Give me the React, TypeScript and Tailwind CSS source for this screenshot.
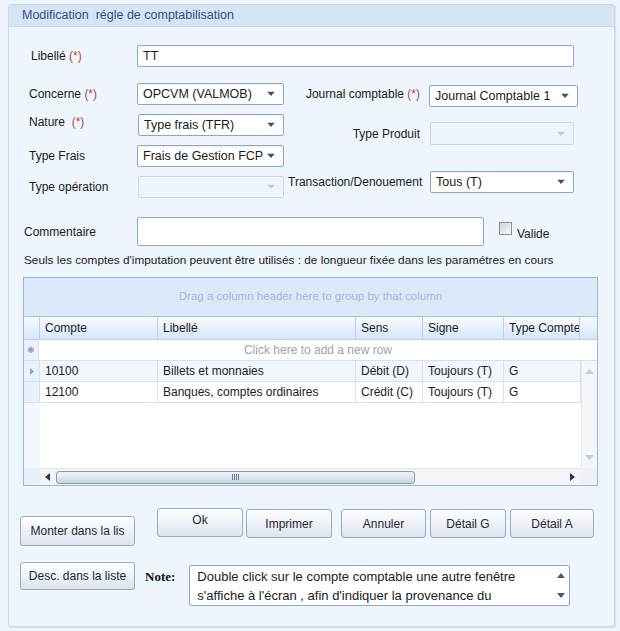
import React from "react";

const FONT = { fontFamily: '"Liberation Sans", Arial, sans-serif' };

function Arrow({ disabled }: { disabled?: boolean }) {
  return (
    <svg width="8" height="5" viewBox="0 0 8 5" className="absolute right-[8px] top-1/2 -translate-y-1/2">
      <polygon points="0,0 8,0 4,4.5" fill={disabled ? "#c3cdd9" : "#3e5170"} />
    </svg>
  );
}

function Select({ value, className, disabled }: { value?: string; className: string; disabled?: boolean }) {
  return (
    <div
      className={
        "relative rounded-[2px] border flex items-center pl-[5px] text-[12.5px] text-[#1b1b1b] whitespace-nowrap " +
        (disabled ? "border-[#c9d7e8] bg-[#eef4fb] " : "border-[#8aa8cf] bg-white shadow-[inset_0_1px_1px_rgba(0,0,0,0.05)] ") +
        className
      }
    >
      <span className="leading-none">{value}</span>
      <Arrow disabled={disabled} />
    </div>
  );
}

function Req() {
  return <span className="text-[#c2413f]">(*)</span>;
}

function Btn({ children, className }: { children: React.ReactNode; className: string }) {
  return (
    <div
      className={
        "flex items-center justify-center rounded-[3px] border border-[#98abc4] bg-linear-to-b from-[#fdfeff] via-[#eef2f7] to-[#dce4ee] text-[12px] text-[#1f2633] whitespace-nowrap shadow-[inset_0_1px_0_#ffffff] " +
        className
      }
    >
      {children}
    </div>
  );
}

function HeaderCell({ children, className }: { children?: React.ReactNode; className: string }) {
  return (
    <div className={"h-full flex items-center pl-[5px] border-l border-[#b9cfea] text-[12px] text-[#1b1b1b] whitespace-nowrap overflow-hidden " + className}>
      {children}
    </div>
  );
}

function Cell({ children, className }: { children?: React.ReactNode; className: string }) {
  return (
    <div className={"h-full flex items-center pl-[5px] border-r border-[#d3e1f1] text-[12px] text-[#1b1b1b] whitespace-nowrap overflow-hidden " + className}>
      {children}
    </div>
  );
}

export default function App() {
  return (
    <div className="w-[620px] h-[631px] bg-[#eef5fc] pt-[4px] pl-[8px]" style={FONT}>
      <div className="w-[607px] h-[623px] border border-[#cbd8e8] rounded-[3px] bg-[#eef5fd] flex flex-col overflow-hidden shadow-[1px_1px_1px_rgba(160,180,205,0.35)]">
        {/* header */}
        <div className="h-[22px] bg-[#d6e4f4] border-b border-[#cad9ec] flex items-center pl-[13px] text-[12.5px] text-[#3a4b85] whitespace-pre">
          {"Modification  régle de comptabilisation"}
        </div>

        {/* Libellé */}
        <div className="flex items-center mt-[18px] ml-[22px]">
          <div className="w-[106px] text-[12px] text-[#1b1b1b]">
            Libellé <Req />
          </div>
          <div className="w-[437px] h-[22px] border border-[#8aa8cf] rounded-[2px] bg-white flex items-center pl-[5px] text-[12.5px] text-[#1b1b1b]">
            TT
          </div>
        </div>

        {/* two columns */}
        <div className="flex mt-[16px]">
          <div className="flex flex-col gap-[9px] ml-[20px]">
            <div className="flex items-center">
              <div className="w-[108px] text-[12px] text-[#1b1b1b]">
                Concerne <Req />
              </div>
              <Select value="OPCVM (VALMOB)" className="w-[147px] h-[22px]" />
            </div>
            <div className="flex items-center">
              <div className="w-[109px] text-[12px] text-[#1b1b1b] -mt-[6px]">
                Nature&nbsp; <Req />
              </div>
              <Select value="Type frais (TFR)" className="w-[146px] h-[22px]" />
            </div>
            <div className="flex items-center">
              <div className="w-[108px] text-[12px] text-[#1b1b1b]">Type Frais</div>
              <Select value="Frais de Gestion FCP" className="w-[147px] h-[22px]" />
            </div>
            <div className="flex items-center">
              <div className="w-[109px] text-[12px] text-[#1b1b1b]">Type opération</div>
              <Select disabled className="w-[146px] h-[22px]" />
            </div>
          </div>
          <div className="flex flex-col ml-[4px]">
            <div className="flex items-center mt-[2px]">
              <div className="w-[141px] pr-[9px] text-right text-[12px] text-[#1b1b1b] -mt-[5px]">
                Journal comptable <Req />
              </div>
              <Select value="Journal Comptable 1" className="w-[149px] h-[22px]" />
            </div>
            <div className="flex items-center mt-[15px]">
              <div className="w-[142px] pr-[10px] text-right text-[12px] text-[#1b1b1b]">Type Produit</div>
              <Select disabled className="w-[144px] h-[23px]" />
            </div>
            <div className="flex items-center mt-[26px]">
              <div className="w-[142px] pr-[8px] text-right text-[12px] text-[#1b1b1b] whitespace-nowrap">Transaction/Denouement</div>
              <Select value="Tous (T)" className="w-[144px] h-[22px]" />
            </div>
          </div>
        </div>

        {/* Commentaire */}
        <div className="flex items-center mt-[19px] ml-[15px]">
          <div className="w-[113px] text-[12px] text-[#1b1b1b]">Commentaire</div>
          <div className="w-[347px] h-[29px] border border-[#8aa8cf] rounded-[2px] bg-white" />
          <div className="ml-[15px] flex items-start h-[29px]">
            <div className="mt-[5px] w-[13px] h-[13px] border border-[#8e8f8f] bg-linear-to-br from-[#d8d8d8] to-[#f6f6f6]" />
            <span className="ml-[5px] mt-[11px] text-[12px] text-[#1b1b1b] leading-none">Valide</span>
          </div>
        </div>

        {/* info */}
        <div className="mt-[7px] ml-[15px] text-[11.8px] text-[#1b1b1b] leading-[15px] whitespace-nowrap">
          Seuls les comptes d'imputation peuvent être utilisés : de longueur fixée dans les paramétres en cours
        </div>

        {/* grid */}
        <div className="mt-[9px] ml-[14px] w-[575px] h-[209px] border border-[#9ab6da] bg-white flex flex-col">
          <div className="h-[39px] bg-[#dce8f8] border-b border-[#a7c0e0] flex items-center justify-center text-[11.5px] text-[#a3b8d6]">
            Drag a column header here to group by that column
          </div>
          <div className="h-[23px] flex bg-linear-to-b from-[#f9fbff] to-[#d7e6f7] border-b border-[#c2d5ec]">
            <div className="w-[15px] h-full" />
            <HeaderCell className="w-[118px]">Compte</HeaderCell>
            <HeaderCell className="w-[198px]">Libellé</HeaderCell>
            <HeaderCell className="w-[67px]">Sens</HeaderCell>
            <HeaderCell className="w-[81px]">Signe</HeaderCell>
            <HeaderCell className="w-[77px] border-r">Type Compte</HeaderCell>
          </div>
          <div className="h-[21px] flex border-b border-[#d3e1f1]">
            <div className="w-[15px] h-full bg-[#eaf1fa] border-r border-[#d3e1f1] flex items-center justify-center">
              <span className="text-[9px] text-[#86a3cb] leading-none">✱</span>
            </div>
            <div className="flex-1 flex items-center justify-center text-[12px] text-[#a3a3a3]">Click here to add a new row</div>
          </div>
          <div className="flex-1 flex">
            <div className="flex-1 flex flex-col">
              <div className="h-[21px] flex border-b border-[#d3e1f1] bg-[#f2f7fd]">
                <div className="w-[16px] h-full bg-[#eaf1fa] border-r border-[#d3e1f1] flex items-center justify-center">
                  <svg width="4" height="7" viewBox="0 0 4 7">
                    <polygon points="0,0 4,3.5 0,7" fill="#86a3cb" />
                  </svg>
                </div>
                <Cell className="w-[118px]">10100</Cell>
                <Cell className="w-[198px]">Billets et monnaies</Cell>
                <Cell className="w-[67px]">Débit (D)</Cell>
                <Cell className="w-[81px]">Toujours (T)</Cell>
                <Cell className="w-[77px]">G</Cell>
              </div>
              <div className="h-[21px] flex border-b border-[#d3e1f1]">
                <div className="w-[16px] h-full bg-[#eaf1fa] border-r border-[#d3e1f1]" />
                <Cell className="w-[118px]">12100</Cell>
                <Cell className="w-[198px]">Banques, comptes ordinaires</Cell>
                <Cell className="w-[67px]">Crédit (C)</Cell>
                <Cell className="w-[81px]">Toujours (T)</Cell>
                <Cell className="w-[77px]">G</Cell>
              </div>
              <div className="flex-1 flex">
                <div className="w-[16px] h-full bg-[#f4f8fc]" />
              </div>
            </div>
            <div className="w-[17px] bg-[#f4f7fa] border-l border-[#e3e9f0] flex flex-col items-center justify-between py-[8px]">
              <svg width="9" height="5" viewBox="0 0 9 5">
                <polygon points="0,5 9,5 4.5,0" fill="#c4ccd6" />
              </svg>
              <svg width="9" height="5" viewBox="0 0 9 5">
                <polygon points="0,0 9,0 4.5,5" fill="#c4ccd6" />
              </svg>
            </div>
          </div>
          <div className="h-[17px] flex">
            <div className="w-[16px] h-full bg-[#e8eff8]" />
            <div className="flex-1 h-full bg-[#f3f5f8] border-t border-[#e0e6ee] flex items-center">
              <svg width="5" height="8" viewBox="0 0 5 8" className="ml-[5px]">
                <polygon points="5,0 5,8 0,4" fill="#2d3847" />
              </svg>
              <div className="ml-[6px] w-[359px] h-[13px] rounded-[3px] border border-[#8f9db0] bg-linear-to-b from-[#f1f4f8] via-[#e0e6ee] to-[#c9d2dd] flex items-center justify-center gap-[1px]">
                <div className="w-[1px] h-[6px] bg-[#6f7d90]" />
                <div className="w-[1px] h-[6px] bg-[#6f7d90]" />
                <div className="w-[1px] h-[6px] bg-[#6f7d90]" />
                <div className="w-[1px] h-[6px] bg-[#6f7d90]" />
              </div>
              <div className="flex-1" />
              <svg width="5" height="8" viewBox="0 0 5 8" className="mr-[5px]">
                <polygon points="0,0 0,8 5,4" fill="#2d3847" />
              </svg>
            </div>
            <div className="w-[17px] h-full bg-[#eef2f7]" />
          </div>
        </div>

        {/* buttons row 1 */}
        <div className="flex items-start mt-[22px] ml-[11px]">
          <Btn className="mt-[8px] w-[115px] h-[30px]">Monter dans la lis</Btn>
          <Btn className="ml-[22px] w-[86px] h-[29px] pb-[5px]">Ok</Btn>
          <Btn className="ml-[3px] mt-[1px] w-[86px] h-[29px]">Imprimer</Btn>
          <Btn className="ml-[9px] mt-[1px] w-[85px] h-[29px]">Annuler</Btn>
          <Btn className="ml-[4px] mt-[1px] w-[76px] h-[29px]">Détail G</Btn>
          <Btn className="ml-[4px] mt-[1px] w-[84px] h-[29px]">Détail A</Btn>
        </div>

        {/* buttons row 2 */}
        <div className="flex items-start mt-[16px] ml-[11px]">
          <Btn className="w-[115px] h-[28px]">Desc. dans la liste</Btn>
          <div
            className="ml-[10px] mt-[5px] text-[13px] font-bold text-[#111]"
            style={{ fontFamily: '"Liberation Serif", "Times New Roman", serif' }}
          >
            Note:
          </div>
          <div className="ml-[14px] mt-[3px] w-[381px] h-[41px] border border-[#8aa8cf] rounded-[2px] bg-white flex">
            <div className="flex-1 pl-[7px] pt-[1px] text-[13px] leading-[19px] text-[#1b1b1b] whitespace-nowrap">
              <div>Double click sur le compte comptable une autre fenêtre</div>
              <div>s'affiche à l'écran , afin d'indiquer la provenance du</div>
            </div>
            <div className="w-[16px] flex flex-col items-center justify-between py-[7px]">
              <svg width="8" height="5" viewBox="0 0 8 5">
                <polygon points="0,5 8,5 4,0" fill="#4a586b" />
              </svg>
              <svg width="8" height="5" viewBox="0 0 8 5">
                <polygon points="0,0 8,0 4,5" fill="#4a586b" />
              </svg>
            </div>
          </div>
        </div>
      </div>
    </div>
  );
}
